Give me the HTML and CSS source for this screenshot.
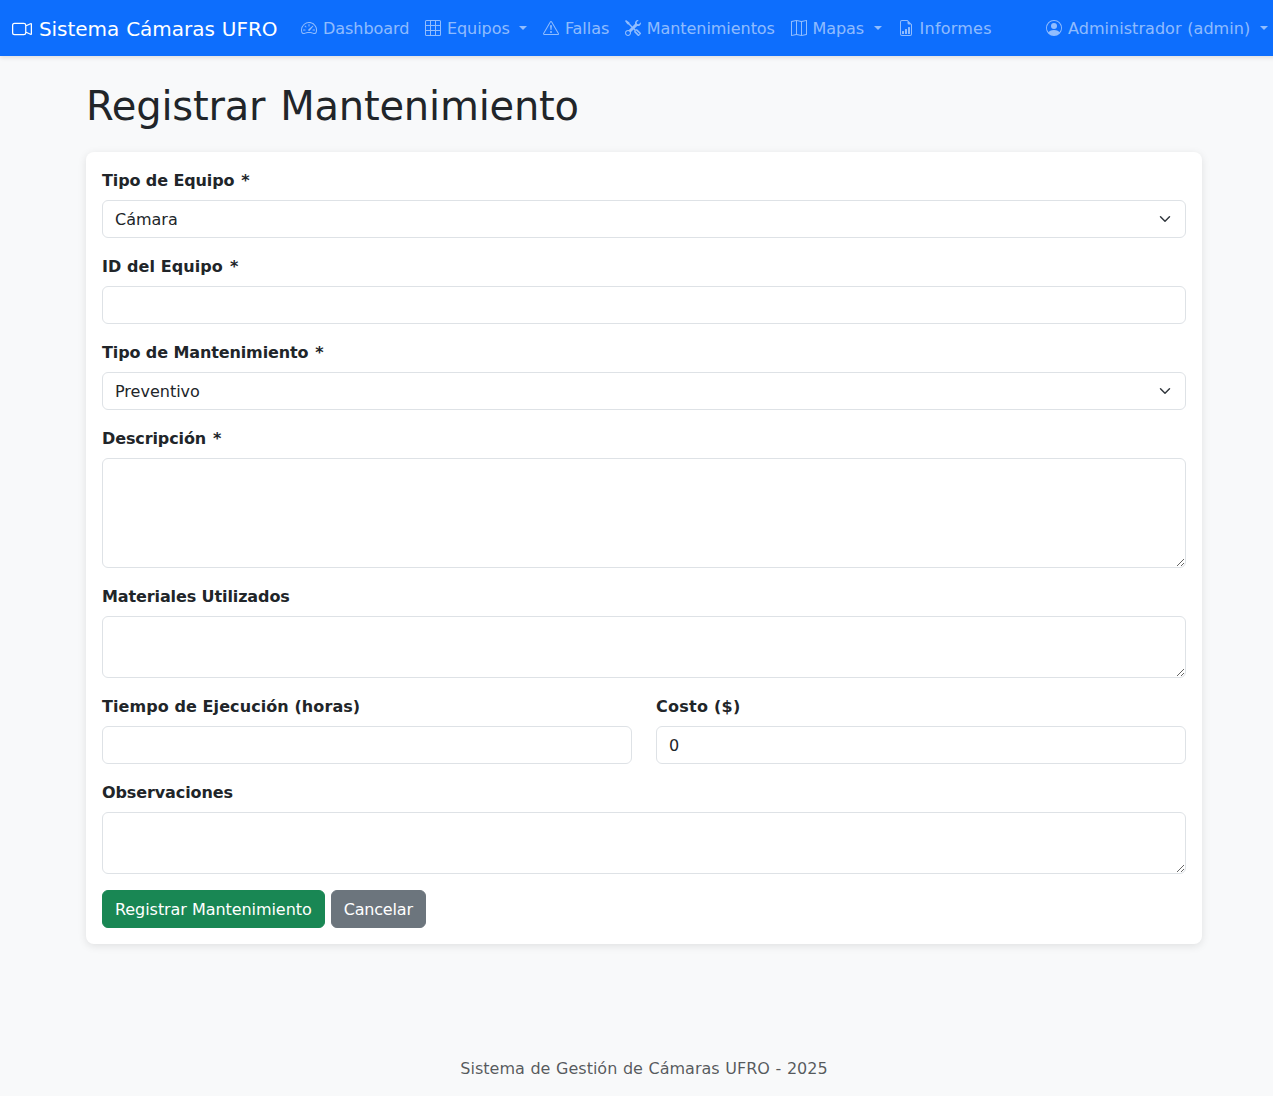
FILE: index.html
```html
<!DOCTYPE html>
<html lang="es">
<head>
<meta charset="utf-8">
<title>Registrar Mantenimiento</title>
<link rel="stylesheet" href="styles.css">
</head>
<body>
<nav class="navbar">
  <a class="brand"><svg class="bi" viewBox="0 0 16 16"><path fill-rule="evenodd" d="M0 5a2 2 0 0 1 2-2h7.5a2 2 0 0 1 1.983 1.738l3.11-1.382A1 1 0 0 1 16 4.269v7.462a1 1 0 0 1-1.406.913l-3.111-1.382A2 2 0 0 1 9.5 13H2a2 2 0 0 1-2-2zm11.5 5.175 3.5 1.556V4.269l-3.5 1.556zM2 4a1 1 0 0 0-1 1v6a1 1 0 0 0 1 1h7.5a1 1 0 0 0 1-1V5a1 1 0 0 0-1-1z"/></svg> Sistema Cámaras UFRO</a>
  <div class="nav">
    <a class="nav-link"><svg class="bi" viewBox="0 0 16 16"><path d="M8 4a.5.5 0 0 1 .5.5V6a.5.5 0 0 1-1 0V4.500A.5.5 0 0 1 8 4M3.732 5.732a.5.5 0 0 1 .707 0l.915.914a.5.5 0 1 1-.708.708l-.914-.915a.5.5 0 0 1 0-.707M2 10a.5.5 0 0 1 .5-.5h1.586a.5.5 0 0 1 0 1H2.500A.5.5 0 0 1 2 10m9.500 0a.5.5 0 0 1 .5-.5h1.500a.5.5 0 0 1 0 1H12a.5.5 0 0 1-.5-.5m.754-4.246a.39.39 0 0 0-.527-.02L7.547 9.310a.91.91 0 1 0 1.302 1.258l3.434-4.297a.39.39 0 0 0-.029-.518z"/><path fill-rule="evenodd" d="M0 10a8 8 0 1 1 15.547 2.661c-.442 1.253-1.845 1.602-2.932 1.250C11.309 13.488 9.475 13 8 13c-1.474 0-3.310.488-4.615.911-1.087.352-2.490.003-2.932-1.250A8 8 0 0 1 0 10m8-7a7 7 0 0 0-6.603 9.329c.203.575.923.876 1.680.630C4.397 12.533 6.358 12 8 12s3.604.532 4.923.960c.757.245 1.477-.056 1.680-.631A7 7 0 0 0 8 3"/></svg> Dashboard</a>
    <a class="nav-link caret"><svg class="bi" viewBox="0 0 16 16"><path d="M0 1.500A1.500 1.500 0 0 1 1.500 0h13A1.500 1.500 0 0 1 16 1.500v13a1.500 1.500 0 0 1-1.500 1.500h-13A1.500 1.500 0 0 1 0 14.500zM1.500 1a.5.5 0 0 0-.5.5V5h4V1zM5 6H1v4h4zm1 4h4V6H6zm-1 1H1v3.500a.5.5 0 0 0 .5.5H5zm1 0v4h4v-4zm5 0v4h3.500a.5.5 0 0 0 .5-.5V11zm0-1h4V6h-4zm0-5h4V1.500a.5.5 0 0 0-.5-.5H11zm-1 0V1H6v4z"/></svg> Equipos </a>
    <a class="nav-link"><svg class="bi" viewBox="0 0 16 16"><path d="M7.938 2.016A.13.13 0 0 1 8.002 2a.13.13 0 0 1 .063.016.15.15 0 0 1 .054.057l6.857 11.667c.036.060.035.124.002.183a.2.2 0 0 1-.054.060.1.1 0 0 1-.066.017H1.146a.1.1 0 0 1-.066-.017.2.2 0 0 1-.054-.060.18.18 0 0 1 .002-.183L7.884 2.073a.15.15 0 0 1 .054-.057m1.044-.450a1.130 1.130 0 0 0-1.960 0L.165 13.233c-.457.778.091 1.767.980 1.767h13.713c.889 0 1.438-.990.980-1.767z"/><path d="M7.002 12a1 1 0 1 1 2 0 1 1 0 0 1-2 0M7.100 5.995a.905.905 0 1 1 1.800 0l-.350 3.507a.552.552 0 0 1-1.100 0z"/></svg> Fallas</a>
    <a class="nav-link"><svg class="bi" viewBox="0 0 16 16"><path d="M1 0 0 1l2.200 3.081a1 1 0 0 0 .815.419h.070a1 1 0 0 1 .708.293l2.675 2.675-2.617 2.654A3.003 3.003 0 0 0 0 13a3 3 0 1 0 5.878-.851l2.654-2.617.968.968-.305.914a1 1 0 0 0 .242 1.023l3.270 3.270a.997.997 0 0 0 1.414 0l1.586-1.586a.997.997 0 0 0 0-1.414l-3.270-3.270a1 1 0 0 0-1.023-.242L10.500 9.500l-.960-.960 2.680-2.643A3.005 3.005 0 0 0 16 3q0-.405-.102-.777l-2.140 2.141L12 4l-.364-1.757L13.777.102a3 3 0 0 0-3.675 3.680L7.462 6.460 4.793 3.793a1 1 0 0 1-.293-.707v-.071a1 1 0 0 0-.419-.814zm9.646 10.646a.5.5 0 0 1 .708 0l2.914 2.915a.5.5 0 0 1-.707.707l-2.915-2.914a.5.5 0 0 1 0-.708M3 11l.471.242.529.026.287.445.445.287.026.529L5 13l-.242.471-.026.529-.445.287-.287.445-.529.026L3 15l-.471-.242L2 14.732l-.287-.445L1.268 14l-.026-.529L1 13l.242-.471.026-.529.445-.287.287-.445.529-.026z"/></svg> Mantenimientos</a>
    <a class="nav-link caret"><svg class="bi" viewBox="0 0 16 16"><path fill-rule="evenodd" d="M15.817.113A.5.5 0 0 1 16 .5v14a.5.5 0 0 1-.402.490l-5 1a.5.5 0 0 1-.196 0L5.500 15.010l-4.902.980A.5.5 0 0 1 0 15.500v-14a.5.5 0 0 1 .402-.490l5-1a.5.5 0 0 1 .196 0L10.500.990l4.902-.980a.5.5 0 0 1 .415.103M10 1.910l-4-.800v12.980l4 .800zm1 12.980 4-.800V1.110l-4 .800zm-6-.800V1.110l-4 .800v12.980z"/></svg> Mapas </a>
    <a class="nav-link wide"><svg class="bi" viewBox="0 0 16 16"><path d="M10 13.500a.5.5 0 0 0 .5.5h1a.5.5 0 0 0 .5-.5v-6a.5.5 0 0 0-.5-.5h-1a.5.5 0 0 0-.5.5zm-2.500.5a.5.5 0 0 1-.5-.5v-4a.5.5 0 0 1 .5-.5h1a.5.5 0 0 1 .5.5v4a.5.5 0 0 1-.5.5zm-3 0a.5.5 0 0 1-.5-.5v-2a.5.5 0 0 1 .5-.5h1a.5.5 0 0 1 .5.5v2a.5.5 0 0 1-.5.5z"/><path d="M14 14V4.500L9.500 0H4a2 2 0 0 0-2 2v12a2 2 0 0 0 2 2h8a2 2 0 0 0 2-2M9.500 3A1.500 1.500 0 0 0 11 4.500h2V14a1 1 0 0 1-1 1H4a1 1 0 0 1-1-1V2a1 1 0 0 1 1-1h5.500z"/></svg> Informes</a>
  </div>
  <a class="nav-link caret user"><svg class="bi" viewBox="0 0 16 16"><path d="M11 6a3 3 0 1 1-6 0 3 3 0 0 1 6 0"/><path fill-rule="evenodd" d="M0 8a8 8 0 1 1 16 0A8 8 0 0 1 0 8m8-7a7 7 0 0 0-5.468 11.370C3.242 11.226 4.805 10 8 10s4.757 1.225 5.468 2.370A7 7 0 0 0 8 1"/></svg> Administrador (admin) </a>
</nav>
<main class="container">
  <h1>Registrar Mantenimiento</h1>
  <form class="card">
    <div class="field">
      <label for="equipo">Tipo de Equipo <span class="req">*</span></label>
      <select class="control" id="equipo"><option>Cámara</option></select>
    </div>
    <div class="field">
      <label class="loose" for="id">ID del Equipo <span class="req">*</span></label>
      <input class="control" id="id" type="text">
    </div>
    <div class="field">
      <label for="tipo">Tipo de Mantenimiento <span class="req">*</span></label>
      <select class="control" id="tipo"><option>Preventivo</option></select>
    </div>
    <div class="field">
      <label for="desc">Descripción <span class="req">*</span></label>
      <textarea class="control" id="desc" rows="4"></textarea>
    </div>
    <div class="field">
      <label for="mat">Materiales Utilizados</label>
      <textarea class="control" id="mat" rows="2"></textarea>
    </div>
    <div class="row">
      <div class="field">
        <label class="loose" for="horas">Tiempo de Ejecución (horas)</label>
        <input class="control" id="horas" type="text">
      </div>
      <div class="field">
        <label class="looser" for="costo">Costo ($)</label>
        <input class="control" id="costo" type="text" value="0">
      </div>
    </div>
    <div class="field">
      <label for="obs">Observaciones</label>
      <textarea class="control" id="obs" rows="2"></textarea>
    </div>
    <div class="actions">
      <button class="btn btn-success" type="button">Registrar Mantenimiento</button>
      <a class="btn btn-secondary">Cancelar</a>
    </div>
  </form>
</main>
<footer class="footer">Sistema de Gestión de Cámaras UFRO - 2025</footer>
</body>
</html>
```
FILE: styles.css
```css
*, *::before, *::after { box-sizing: border-box; }
html { overflow: hidden; }
body {
  margin: 0;
  width: 1288px;
  min-height: 1096px;
  display: flex;
  flex-direction: column;
  background: #f8f9fa;
  color: #212529;
  font: 16px/1.5 Verdana, "DejaVu Sans", sans-serif;
  word-spacing: .034em;
}
.bi { width: 1em; height: 1em; fill: currentColor; vertical-align: -0.125em; }
.navbar {
  display: flex;
  align-items: center;
  height: 56px;
  padding: 2px 12px 0;
  background: #0d6efd;
  box-shadow: 0 2px 4px rgba(0, 0, 0, .1);
}
.brand { margin-right: 16px; font-size: 20px; color: #fff; white-space: nowrap; letter-spacing: -.02px; }
.nav { display: flex; flex: 1; letter-spacing: -.055px; }
.nav-link { padding: 8px; color: rgba(255, 255, 255, .55); white-space: nowrap; }
.wide { letter-spacing: .22px; }
.user { letter-spacing: .05px; }
.caret::after {
  content: "";
  display: inline-block;
  margin-left: .255em;
  vertical-align: .255em;
  border-top: .3em solid;
  border-right: .3em solid transparent;
  border-left: .3em solid transparent;
}
.container { width: 1140px; margin: 0 auto; padding: 24px 12px 0; flex: 1; }
h1 {
  margin: 0 0 24px;
  padding-top: 4px;
  font-size: 40px;
  font-weight: 500;
  line-height: 44px;
  letter-spacing: -.2px;
  word-spacing: 2.4px;
}
.card {
  padding: 16px;
  background: #fff;
  border-radius: 8px;
  box-shadow: 0 2px 8px rgba(0, 0, 0, .1);
}
.field { margin-bottom: 16px; }
label {
  display: block;
  margin-bottom: 8px;
  padding-top: 2px;
  line-height: 22px;
  font-weight: 600;
  letter-spacing: -.11px;
  word-spacing: 0;
}
.loose { letter-spacing: .08px; }
.looser { letter-spacing: .25px; }
.req { margin-left: 1.4px; }
.control {
  display: block;
  width: 100%;
  margin: 0;
  padding: 7px 12px 5px;
  border: 1px solid #dee2e6;
  border-radius: 6px;
  background: #fff;
  color: #212529;
  font: inherit;
}
select.control {
  appearance: none;
  padding-right: 36px;
  background: #fff url("data:image/svg+xml,%3csvg xmlns='http://www.w3.org/2000/svg' viewBox='0 0 16 16'%3e%3cpath fill='none' stroke='%23343a40' stroke-linecap='round' stroke-linejoin='round' stroke-width='2' d='m2 5 6 6 6-6'/%3e%3c/svg%3e") no-repeat right 12px center / 16px 12px;
}
textarea.control { resize: vertical; }
.row { display: grid; grid-template-columns: 1fr 1fr; gap: 24px; }
.actions { display: flex; gap: 6px; }
.btn {
  padding: 7px 12px 5px;
  border: 1px solid transparent;
  border-radius: 6px;
  color: #fff;
  font: inherit;
  letter-spacing: -.06px;
}
.btn-success { background: #198754; border-color: #198754; }
.btn-secondary { background: #6c757d; border-color: #6c757d; letter-spacing: -.18px; }
.footer { padding: 17px 16px 15px; text-align: center; color: rgba(33, 37, 41, .75); }
```
